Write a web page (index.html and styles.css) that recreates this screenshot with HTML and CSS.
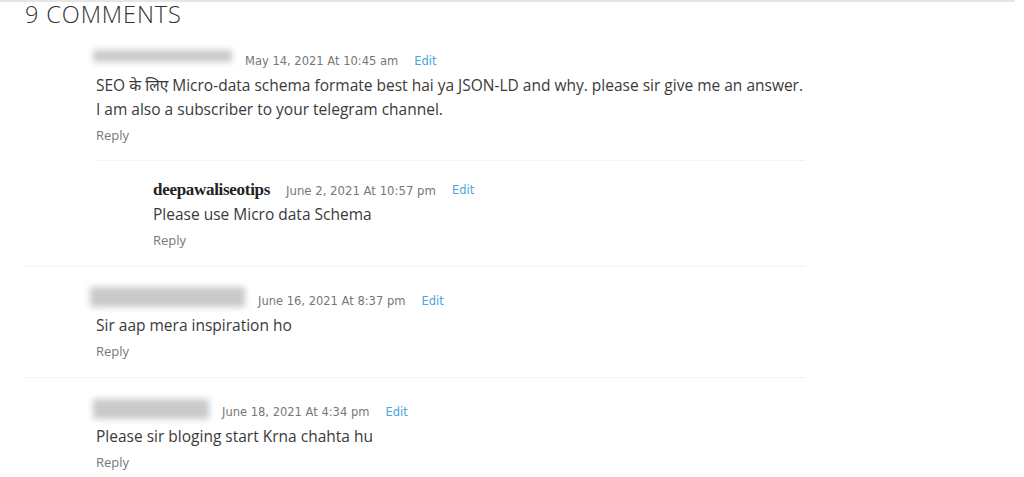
FILE: index.html
```html
<!DOCTYPE html>
<html>
<head>
    <title>Comments</title>
    <link rel="stylesheet" href="styles.css">
</head>
<body>
    <div class="comments-area">
        <h3 class="comments-title">9 COMMENTS</h3>

        <ol class="comment-list">
            <li class="comment">
                <div class="comment-body">
                    <div class="comment-meta">
                        <span class="author-blur blur-a"></span>
                        <span class="comment-date">May 14, 2021 At 10:45 am</span>
                        <a class="edit-link" href="#">Edit</a>
                    </div>
                    <div class="comment-content">
                        <p>SEO के लिए Micro-data schema formate best hai ya JSON-LD and why. please sir give me an answer.</p>
                        <p>I am also a subscriber to your telegram channel.</p>
                    </div>
                    <a class="reply-link" href="#">Reply</a>
                </div>

                <ol class="children">
                    <li class="comment child">
                        <div class="comment-body">
                            <div class="comment-meta">
                                <span class="author-name">deepawaliseotips</span>
                                <span class="comment-date condensed">June 2, 2021 At 10:57 pm</span>
                                <a class="edit-link" href="#">Edit</a>
                            </div>
                            <div class="comment-content">
                                <p>Please use Micro data Schema</p>
                            </div>
                            <a class="reply-link" href="#">Reply</a>
                        </div>
                    </li>
                </ol>
            </li>

            <li class="comment">
                <div class="comment-body">
                    <div class="comment-meta">
                        <span class="author-blur blur-b"></span>
                        <span class="comment-date">June 16, 2021 At 8:37 pm</span>
                        <a class="edit-link" href="#">Edit</a>
                    </div>
                    <div class="comment-content">
                        <p>Sir aap mera inspiration ho</p>
                    </div>
                    <a class="reply-link" href="#">Reply</a>
                </div>
            </li>

            <li class="comment">
                <div class="comment-body">
                    <div class="comment-meta">
                        <span class="author-blur blur-c"></span>
                        <span class="comment-date">June 18, 2021 At 4:34 pm</span>
                        <a class="edit-link" href="#">Edit</a>
                    </div>
                    <div class="comment-content">
                        <p>Please sir bloging start Krna chahta hu</p>
                    </div>
                    <a class="reply-link" href="#">Reply</a>
                </div>
            </li>
        </ol>
    </div>
</body>
</html>
```

FILE: styles.css
```css
body {
    margin: 0;
    background: #fff;
    font-family: "Open Sans", "Noto Sans", sans-serif;
    color: #3a3a3a;
    overflow: hidden;
}
.comments-area {
    width: 1015px;
    border-top: 2px solid #e6e6e6;
}
.comments-title {
    margin: 0 0 0 25px;
    height: 25px;
    font-size: 23.5px;
    line-height: 25px;
    font-weight: 300;
    letter-spacing: 0.9px;
    color: #333;
}
.comment-list,
.children {
    list-style: none;
    margin: 0;
    padding: 0;
}
.comment-list {
    width: 781px;
    margin-left: 24px;
}
.comment {
    padding: 22px 0 13px;
    border-bottom: 1px dotted #e8e8e8;
}
.comment:last-child {
    border-bottom: none;
}
.comment-body {
    padding-left: 72px;
}
.children {
    margin: 12px 0 0 72px;
    border-top: 1px dotted #e8e8e8;
}
.comment.child {
    padding: 17px 0 0;
    border-bottom: none;
}
.comment.child .comment-body {
    padding-left: 57px;
}
.comment-meta {
    display: flex;
    align-items: center;
    height: 24px;
}
.author-blur {
    display: inline-block;
    background: #c9c9c9;
    filter: blur(3px);
    margin-right: 13px;
}
.blur-a {
    width: 139px;
    height: 12px;
    margin-left: -3px;
    margin-top: -10px;
}
.blur-b {
    width: 155px;
    height: 20px;
    margin-left: -6px;
    margin-top: -8px;
}
.blur-c {
    width: 116px;
    height: 20px;
    margin-left: -3px;
    margin-top: -6px;
}
.author-name {
    font-family: "Liberation Serif", serif;
    font-weight: bold;
    font-size: 17px;
    letter-spacing: -0.3px;
    color: #222;
    margin-right: 16px;
}
.comment-date {
    font-family: "DejaVu Sans", sans-serif;
    font-size: 11.5px;
    color: #777;
    margin-right: 16px;
}
.comment-date.condensed {
    font-family: "DejaVu Sans Condensed", "DejaVu Sans", sans-serif;
    font-size: 13px;
}
.edit-link {
    font-family: "DejaVu Sans", sans-serif;
    font-size: 11.5px;
    color: #4aa6e0;
    text-decoration: none;
}
.comment-content p {
    margin: 0;
    font-size: 15.5px;
    line-height: 24px;
}
.reply-link {
    display: block;
    margin-top: 1px;
    font-size: 13px;
    line-height: 26px;
    color: #777;
    text-decoration: none;
}
```
